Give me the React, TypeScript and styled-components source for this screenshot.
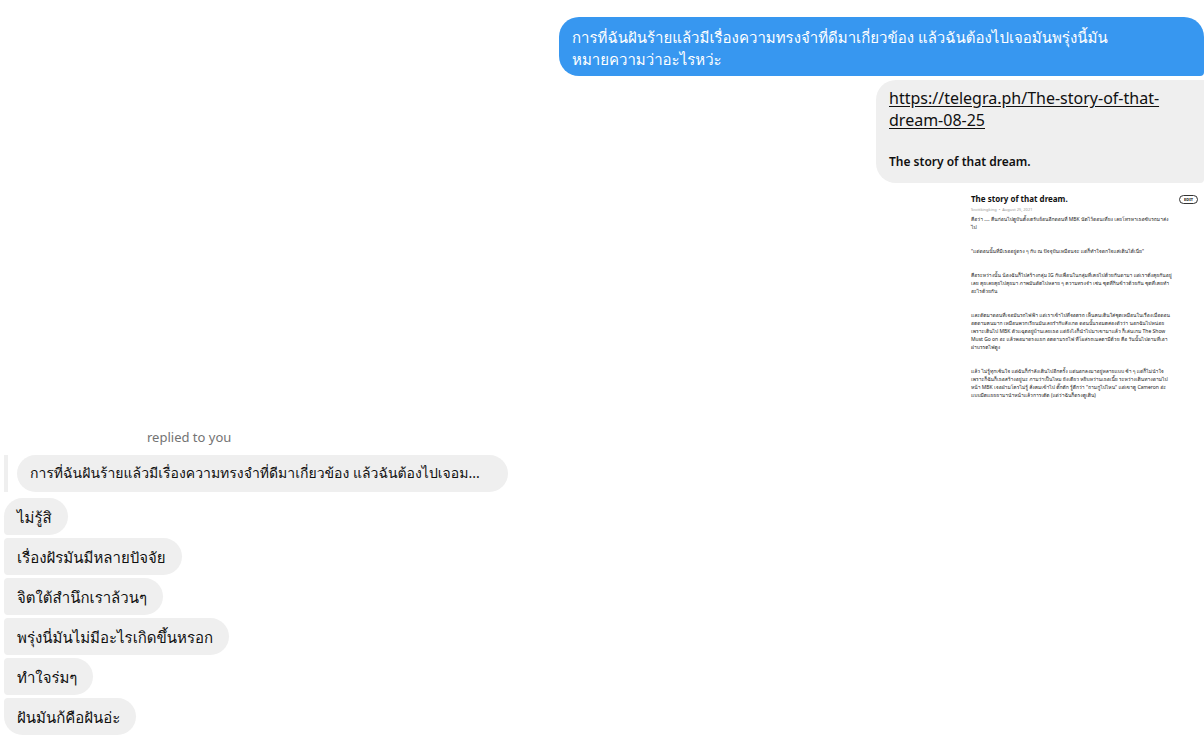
import React from "react";
import styled, { createGlobalStyle } from "styled-components";

const GlobalStyle = createGlobalStyle`
  * { box-sizing: border-box; }
  body {
    margin: 0;
    background: #fff;
    color: #101010;
    font-family: "Noto Sans", "Loma", "Noto Sans Thai Looped", "Noto Sans Thai", sans-serif;
    font-size: 16px;
    overflow-x: hidden;
  }
`;

const Thread = styled.main`
  display: flex;
  flex-direction: column;
  padding-top: 17px;
`;

const Outgoing = styled.section`
  display: flex;
  flex-direction: column;
  align-items: flex-end;
  gap: 4px;
`;

const SentBubble = styled.p`
  margin: 0;
  width: 645px;
  max-width: 100%;
  padding: 9px 13px 6px;
  border-radius: 20px 20px 4px 20px;
  background: #3797f0;
  color: #fff;
  font-size: 15px;
  line-height: 22px;
`;

const LinkBubble = styled.div`
  display: flex;
  flex-direction: column;
  gap: 21px;
  width: 328px;
  max-width: 100%;
  padding: 7px 13px 11px;
  border-radius: 20px 0 4px 20px;
  background: #efefef;
`;

const StoryLink = styled.a`
  color: inherit;
  font-size: 16px;
  line-height: 22px;
  text-decoration: underline;
  text-underline-offset: 2px;
`;

const LinkTitle = styled.strong`
  font-size: 12px;
  line-height: 20px;
  font-weight: 600;
`;

const Preview = styled.article`
  display: grid;
  grid-template-columns: 1fr auto;
  width: 233px;
  padding: 6px 6px 0 0;
`;

const PreviewTitle = styled.h1`
  margin: 0;
  font-size: 8px;
  line-height: 12px;
  font-weight: 700;
`;

const EditButton = styled.button`
  align-self: center;
  width: 19px;
  height: 9px;
  padding: 0;
  border: 1px solid #333;
  border-radius: 5px;
  background: #fff;
  color: #111;
  font: 700 4px/7px "Noto Sans", sans-serif;
`;

const Byline = styled.p`
  grid-column: 1 / -1;
  margin: 0 0 1px;
  color: #999;
  font-size: 4px;
  line-height: 9px;
  white-space: pre;
`;

const PreviewText = styled.p`
  grid-column: 1 / -1;
  margin: 0 0 16px;
  color: #222;
  font-size: 5px;
  line-height: 8px;
  white-space: pre-line;
`;

const ReplyNote = styled.p`
  margin: 10px 0 6px 147px;
  color: #737373;
  font-size: 13px;
  line-height: 24px;
`;

const Quote = styled.blockquote`
  display: flex;
  align-self: flex-start;
  margin: 0 0 6px 4px;
  padding-left: 9px;
  border-left: 4px solid #efefef;
`;

const QuoteText = styled.p`
  margin: 0;
  width: 491px;
  max-width: 100%;
  padding: 8px 13px 9px;
  border-radius: 19px;
  background: #efefef;
  font-size: 14px;
  line-height: 20px;
`;

const Incoming = styled.ul`
  display: flex;
  flex-direction: column;
  align-items: flex-start;
  gap: 3px;
  margin: 0;
  padding: 0 4px;
  list-style: none;
`;

const ReceivedBubble = styled.li`
  padding: 8px 16px 7px 13px;
  border-radius: 4px 19px 19px 4px;
  background: #efefef;
  font-size: 15px;
  line-height: 22px;

  &:first-child { border-top-left-radius: 19px; }
  &:last-child { border-bottom-left-radius: 19px; }
`;

const storyParagraphs = [
  `คือว่า .... คืนก่อนไปดูบันดั้งเดรับย้อนอีกตอนที่ MBK นัดไว้ตอนเที่ยง เลยโทรหาเธอขับรถมาส่ง
  ไป`,
  `"แต่ตอนนั้นที่มีเธออยู่ตรง ๆ กับ ณ ปัจจุบันเหมือนจะ แต่ก็ทำใจตกใจแค่เดินได้เนี่ย"`,
  `คือระหว่างนั้น น้องฉันก็ไปสร้างกลุ่ม IG กับเพื่อนในกลุ่มที่เคยไปด้วยกันตามา แต่เราดั่งคุยกันอยู่
  เลย คุยเลยคุยไปคุยมา ภาพมันตัดไปหลาย ๆ ความทรงจำ เช่น ชุดที่กินข้าวด้วยกัน ชุดที่เคยทำ
  อะไรด้วยกัน`,
  `และตัดมาตอนที่เจอมันรถไฟฟ้า แต่เราเข้าไปที่จอดรถ เห็นคนเดินใส่ชุดเหมือนในเรื่องเมื่อตอน
  อดตามคนมาก เหมือนพวกเรียนมันเลยรำกับสังเกต ตอนนั้นรอมดสองตัวว่า นอกฉันไปหน่อย
  เพราะเดินไป MBK ตัวแฉุดอยู่บ้านเลยเธอ แต่ยังไงก็นำไปมาเขามาแล้ว ก็เล่นเกม The Show
  Must Go on อะ แล้วพอมาตรงแยก อดตามรถไฟ ที่โผล่รถเมลดามีด้วย คือ วันนั้นไปตามที่เอา
  ฝาบรรดไฟดูง`,
  `แล้ว ไม่รู้ทุกเช้นใจ แต่ฉันก็กำลังเดินไปอีกครั้ง แต่นอกลงมาอยู่หลายแบบ ช้า ๆ แต่ก็ไม่นำใจ
  เพราะก็ฉันก็เธอสร้างอยู่นะ ภามว่าเป็นไหม ยังเดียว หยิบหว่านเธอเนี้ย ระหว่างเดินทางตามไป
  หน้า MBK เจอฝ่ามโครไม่รู้ สั่งคมเข้าไป ดั๊กดัก รู้ดีกว่า "ถามกูไปไหน" แต่เขาดู Cameron อ่ะ
  แบบมีดแยยยามานำหน้าแล้วการเดัด (แต่ว่าฉันก็ตรงดูเดิน)`,
];

const replies = [
  "ไม่รู้สิ",
  "เรื่องฝัรมันมีหลายปัจจัย",
  "จิตใต้สำนึกเราล้วนๆ",
  "พรุ่งนี่มันไม่มีอะไรเกิดขึ้นหรอก",
  "ทำใจร่มๆ",
  "ฝันมันก้คือฝันอ่ะ",
];

export default function App() {
  return (
    <>
      <GlobalStyle />
      <Thread>
        <Outgoing>
          <SentBubble>
            การที่ฉันฝันร้ายแล้วมีเรื่องความทรงจำที่ดีมาเกี่ยวข้อง แล้วฉันต้องไปเจอมันพรุ่งนี้มัน
            <br />
            หมายความว่าอะไรหว่ะ
          </SentBubble>
          <LinkBubble>
            <StoryLink href="https://telegra.ph/The-story-of-that-dream-08-25">
              https://telegra.ph/The-story-of-that-
              <br />
              dream-08-25
            </StoryLink>
            <LinkTitle>The story of that dream.</LinkTitle>
          </LinkBubble>
          <Preview>
            <PreviewTitle>The story of that dream.</PreviewTitle>
            <EditButton type="button">EDIT</EditButton>
            <Byline>{"Scottkingking  •  August 25, 2021"}</Byline>
            {storyParagraphs.map((text) => (
              <PreviewText key={text}>{text}</PreviewText>
            ))}
          </Preview>
        </Outgoing>
        <ReplyNote>replied to you</ReplyNote>
        <Quote>
          <QuoteText>การที่ฉันฝันร้ายแล้วมีเรื่องความทรงจำที่ดีมาเกี่ยวข้อง แล้วฉันต้องไปเจอม...</QuoteText>
        </Quote>
        <Incoming>
          {replies.map((text) => (
            <ReceivedBubble key={text}>{text}</ReceivedBubble>
          ))}
        </Incoming>
      </Thread>
    </>
  );
}
